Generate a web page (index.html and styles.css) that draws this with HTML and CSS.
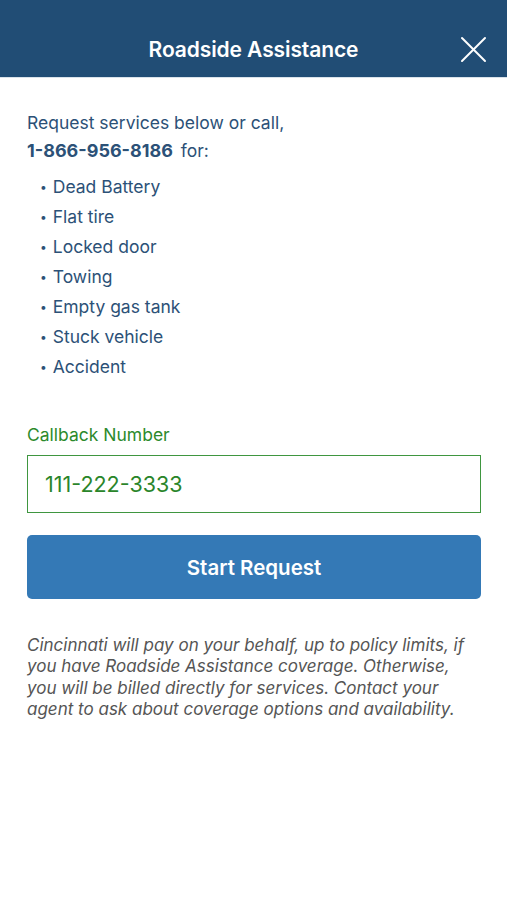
FILE: index.html
```html
<!DOCTYPE html>
<html lang="en">
<head>
    <meta charset="UTF-8">
    <meta name="viewport" content="width=device-width, initial-scale=1.0">
    <title>Roadside Assistance</title>
    <link rel="stylesheet" href="styles.css">
</head>
<body>
    <header class="topbar">
        <h1>Roadside Assistance</h1>
        <button class="close-btn" aria-label="Close">
            <svg width="27" height="27" viewBox="0 0 27 27" fill="none" stroke="currentColor" stroke-width="2" stroke-linecap="round">
                <line x1="2" y1="2" x2="25" y2="25"></line>
                <line x1="25" y1="2" x2="2" y2="25"></line>
            </svg>
        </button>
    </header>

    <main class="content">
        <p class="intro">Request services below or call,</p>
        <p class="phone"><strong>1-866-956-8186</strong> for:</p>

        <ul class="services">
            <li>Dead Battery</li>
            <li>Flat tire</li>
            <li>Locked door</li>
            <li>Towing</li>
            <li>Empty gas tank</li>
            <li>Stuck vehicle</li>
            <li>Accident</li>
        </ul>

        <div class="field">
            <label for="callback">Callback Number</label>
            <input id="callback" type="tel" value="111-222-3333">
        </div>

        <button class="start-btn">Start Request</button>

        <p class="note">Cincinnati will pay on your behalf, up to policy limits, if you have Roadside Assistance coverage. Otherwise, you will be billed directly for services. Contact your agent to ask about coverage options and availability.</p>
    </main>
</body>
</html>
```

FILE: styles.css
```css
* {
    margin: 0;
    padding: 0;
    box-sizing: border-box;
    font-family: Inter, "Noto Sans", sans-serif;
}

body {
    background-color: white;
    color: #2c5177;
}

.topbar {
    position: relative;
    height: 78px;
    background-color: #214d75;
    color: white;
    display: flex;
    align-items: center;
    justify-content: center;
    padding-top: 21px;
    border-bottom: 1px solid #d9e2ea;
}

.topbar h1 {
    font-size: 21px;
    font-weight: 600;
    letter-spacing: -0.1px;
}

.close-btn {
    position: absolute;
    right: 20px;
    top: 36px;
    background: none;
    border: none;
    color: white;
    display: flex;
}

.content {
    padding: 30px 26px 0 27px;
}

.intro {
    font-size: 17.5px;
    line-height: 29px;
}

.phone {
    font-size: 17.5px;
    line-height: 28px;
    word-spacing: 3px;
}

.phone strong {
    font-weight: 700;
    font-size: 18px;
}

.services {
    list-style: none;
    margin-top: 7px;
    padding-left: 13px;
}

.services li {
    font-size: 17.5px;
    line-height: 30px;
}

.services li::before {
    content: "•";
    font-size: 12px;
    margin-right: 6px;
    vertical-align: 2px;
}

.field {
    margin-top: 41px;
}

label {
    display: block;
    color: #2c8a2c;
    font-size: 17.5px;
    line-height: 24px;
    margin-bottom: 8px;
}

input {
    width: 100%;
    height: 58px;
    border: 1.5px solid #3f9640;
    padding: 0 17px;
    font-size: 21.5px;
    color: #2a852a;
    outline: none;
}

.start-btn {
    display: block;
    width: 100%;
    height: 64px;
    margin-top: 22px;
    border: none;
    border-radius: 5px;
    background-color: #3479b6;
    color: white;
    font-size: 20.5px;
    font-weight: 600;
}

.note {
    margin-top: 36px;
    font-size: 17px;
    line-height: 21.4px;
    font-style: italic;
    color: #555;
}
```
